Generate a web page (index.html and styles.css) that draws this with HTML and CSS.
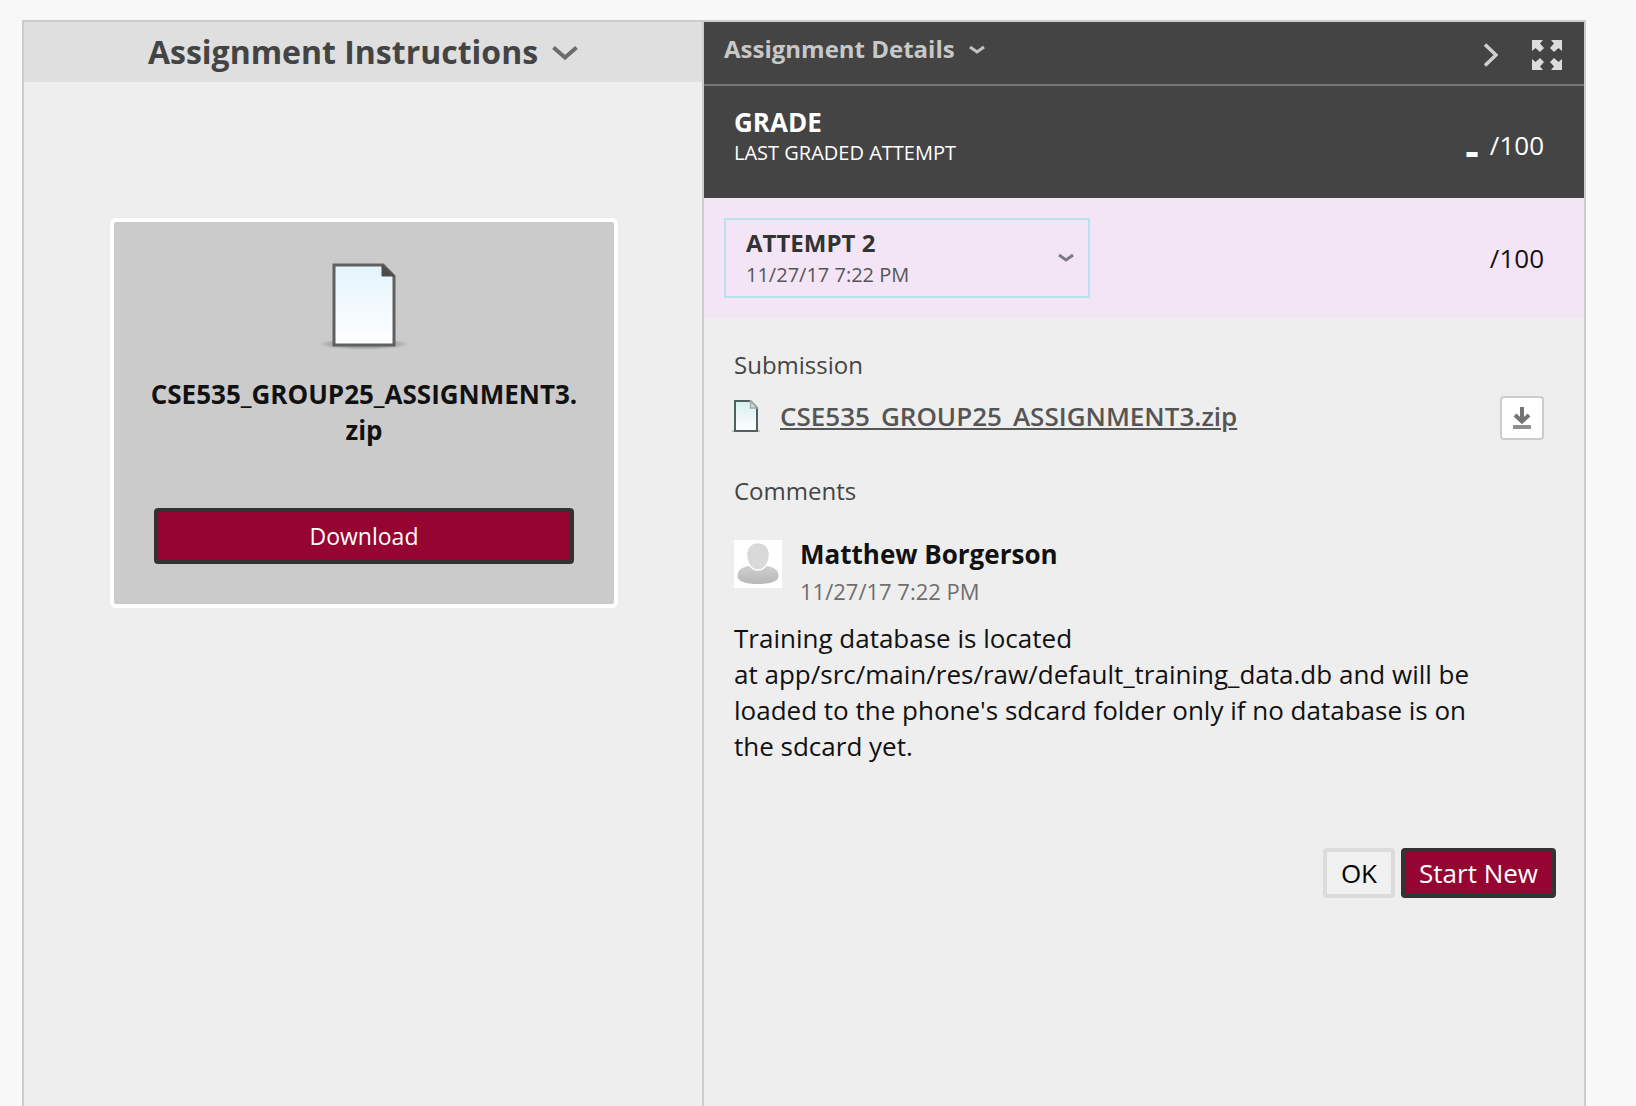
FILE: index.html
```html
<!DOCTYPE html>
<html lang="en">
<head>
<meta charset="utf-8">
<meta name="viewport" content="width=device-width, initial-scale=1">
<title>Assignment Details</title>
<link rel="stylesheet" href="styles.css">
</head>
<body>
<main class="frame">
  <section class="instructions">
    <h1 class="instructions-head">
      <button type="button" class="toggle toggle-large" aria-expanded="true">
        Assignment Instructions
        <svg class="chevron-large" width="26" height="16" viewBox="0 0 26 16" aria-hidden="true"><path d="M1.500 3.500 13 13.500 24.500 3.500" fill="none" stroke="#6c6c6c" stroke-width="4"/></svg>
      </button>
    </h1>
    <div class="instructions-body">
      <article class="file-card">
        <svg class="file-art" width="96" height="96" viewBox="0 0 96 96" aria-hidden="true">
          <defs>
            <linearGradient id="sheet" x1="0" y1="0" x2="0" y2="1"><stop offset="0" stop-color="#e4f4fe"/><stop offset="1" stop-color="#ffffff"/></linearGradient>
            <radialGradient id="shade"><stop offset="0" stop-color="#777" stop-opacity=".8"/><stop offset=".7" stop-color="#888" stop-opacity=".5"/><stop offset="1" stop-color="#999" stop-opacity="0"/></radialGradient>
          </defs>
          <ellipse cx="48" cy="90" rx="47" ry="6" fill="url(#shade)"/>
          <path d="M18 11H67L78 22V91H18Z" fill="url(#sheet)" stroke="#606060" stroke-width="3"/>
          <path d="M66 11V22H78Z" fill="#4c4c4c" stroke="#4c4c4c" stroke-width="1"/>
        </svg>
        <h2 class="file-name">CSE535_GROUP25_ASSIGNMENT3.<wbr>zip</h2>
        <button type="button" class="btn btn-primary btn-block">Download</button>
      </article>
    </div>
  </section>

  <section class="details">
    <header class="details-head">
      <h2 class="details-title">
        <button type="button" class="toggle toggle-light" aria-expanded="true">
          Assignment Details
          <svg width="16" height="10" viewBox="0 0 16 10" aria-hidden="true"><path d="M1 3 8 8 15 3" fill="none" stroke="#c4c4c4" stroke-width="3"/></svg>
        </button>
      </h2>
      <div class="details-actions">
        <button type="button" class="icon-btn" aria-label="Collapse panel">
          <svg width="14" height="24" viewBox="0 0 14 24" aria-hidden="true"><path d="M1 1.500 12 12 1 22.500" fill="none" stroke="#d0d0d0" stroke-width="3.400"/></svg>
        </button>
        <button type="button" class="icon-btn" aria-label="Full screen">
          <svg width="30" height="30" viewBox="0 0 30 30" aria-hidden="true">
            <g fill="#dcdcdc">
              <path d="M0 0H11L8 3.500 12 8 8 12 3.500 8 0 11Z"/>
              <path d="M30 0H19L22 3.500 18 8 22 12 26.500 8 30 11Z"/>
              <path d="M0 30H11L8 26.500 12 22 8 18 3.500 22 0 19Z"/>
              <path d="M30 30H19L22 26.500 18 22 22 18 26.500 22 30 19Z"/>
            </g>
          </svg>
        </button>
      </div>
    </header>

    <div class="grade">
      <div>
        <h3 class="grade-title">GRADE</h3>
        <p class="grade-note">LAST GRADED ATTEMPT</p>
      </div>
      <p class="score"><strong class="score-value">-</strong><span>/100</span></p>
    </div>

    <div class="attempt">
      <button type="button" class="attempt-picker" aria-haspopup="listbox">
        <span class="attempt-text">
          <span class="attempt-name">ATTEMPT 2</span>
          <span class="attempt-date">11/27/17 7:22 PM</span>
        </span>
        <svg width="16" height="10" viewBox="0 0 16 10" aria-hidden="true"><path d="M1 2 8 7 15 2" fill="none" stroke="#7d7683" stroke-width="3"/></svg>
      </button>
      <p class="score">/100</p>
    </div>

    <div class="details-body">
      <h3 class="label">Submission</h3>
      <div class="submission">
        <svg class="submission-icon" width="28" height="32" viewBox="0 0 28 32" aria-hidden="true">
          <defs><linearGradient id="page" x1="0" y1="0" x2="0" y2="1"><stop offset="0" stop-color="#d8eeee"/><stop offset="1" stop-color="#ffffff"/></linearGradient></defs>
          <path d="M0 31H28" stroke="#c2c4c4" stroke-width="2"/>
          <path d="M3 1H18.500L25 8V31H3Z" fill="url(#page)" stroke="#4f6060" stroke-width="2"/>
          <path d="M18.500 1V8H25Z" fill="#d4dcdc" stroke="#a2abab" stroke-width="1.500"/>
        </svg>
        <a class="submission-link" href="#">CSE535_GROUP25_ASSIGNMENT3.zip</a>
        <button type="button" class="download-btn" aria-label="Download submission">
          <svg width="18" height="22" viewBox="0 0 18 22" aria-hidden="true"><path d="M9 0V13M2 8 9 14.500 16 8" fill="none" stroke="#747474" stroke-width="4"/><path d="M0 20H18" stroke="#8f8f8f" stroke-width="4"/></svg>
        </button>
      </div>

      <h3 class="label">Comments</h3>
      <article class="comment">
        <div class="comment-head">
          <svg class="avatar" width="48" height="48" viewBox="0 0 48 48" aria-hidden="true">
            <defs><linearGradient id="person" x1="0" y1="0" x2="0" y2="1"><stop offset="0" stop-color="#cfcfcf"/><stop offset="1" stop-color="#b8b8b8"/></linearGradient></defs>
            <rect width="48" height="48" fill="#fff"/>
            <path d="M3.500 36C3.500 30 8 27 15 26H33C40 27 44.500 30 44.500 36 44.500 41.500 36 44 24 44S3.500 41.500 3.500 36Z" fill="url(#person)"/>
            <path d="M24 2.500C31 2.500 35.500 7.500 35.500 15S31 30 24 30 12.500 22.500 12.500 15 17 2.500 24 2.500Z" fill="#d9d9d9" stroke="#fff" stroke-width="1.500"/>
          </svg>
          <div>
            <h4 class="comment-author">Matthew Borgerson</h4>
            <p class="comment-date">11/27/17 7:22 PM</p>
          </div>
        </div>
        <p class="comment-text">Training database is located at&nbsp;app/src/main/res/raw/default_training_data.db and will be loaded to the phone's sdcard folder only if no database is on the sdcard yet.</p>
      </article>

      <div class="actions">
        <button type="button" class="btn btn-plain">OK</button>
        <button type="button" class="btn btn-primary">Start New</button>
      </div>
    </div>
  </section>
</main>
</body>
</html>
```
FILE: styles.css
```css
* {
  box-sizing: border-box;
}

body {
  margin: 0;
  background: #f8f8f8;
  color: #111;
  font-family: "Open Sans", sans-serif;
  font-size: 26px;
  line-height: 36px;
}

h1, h2, h3, h4, p {
  margin: 0;
}

button {
  font: inherit;
  color: inherit;
  cursor: pointer;
}

svg {
  display: block;
  flex: none;
}

.frame {
  display: grid;
  grid-template-columns: minmax(0, 17fr) minmax(0, 22fr);
  min-height: calc(100vh - 20px);
  margin: 20px 50px 0 22px;
  border: 2px solid #ccc;
  border-bottom: 0;
  background: #eee;
}

.toggle {
  display: flex;
  align-items: center;
  gap: 14px;
  padding: 0;
  border: 0;
  background: none;
  font-weight: 700;
}

/* Left pane */

.instructions {
  border-right: 2px solid #ccc;
}

.instructions-head {
  display: flex;
  justify-content: center;
  background: #dfdfdf;
}

.toggle-large {
  color: #444;
  font-size: 32px;
  font-weight: 660;
  line-height: 60px;
}

.instructions-body {
  padding: 136px 84px 40px 86px;
}

.file-card {
  display: flex;
  flex-direction: column;
  align-items: center;
  padding: 32px 40px 40px;
  border: 4px solid #fff;
  border-radius: 6px;
  background: #cbcbcb;
}

.file-name {
  margin: 26px 0 60px;
  font-size: 26px;
  font-weight: 660;
  line-height: 36px;
  text-align: center;
}

/* Buttons */

.btn {
  padding: 0 14px;
  border: 4px solid #333;
  border-radius: 4px;
  font-size: 26px;
  line-height: 42px;
}

.btn-primary {
  background: #960532;
  color: #fff;
}

.btn-plain {
  border-color: #dbdbdb;
  background: #f0f0f0;
  color: #000;
}

.btn-block {
  width: 100%;
  font-size: 23px;
  line-height: 48px;
}

/* Right pane */

.details-head {
  display: flex;
  justify-content: space-between;
  height: 64px;
  padding: 0 22px 0 20px;
  border-bottom: 2px solid #777;
  background: #444;
}

.toggle-light {
  color: #c8c8c8;
  font-size: 24px;
  line-height: 54px;
}

.details-actions {
  display: flex;
  align-items: center;
  gap: 34px;
  padding-top: 3px;
}

.icon-btn {
  padding: 0;
  border: 0;
  background: none;
}

.grade {
  display: flex;
  justify-content: space-between;
  align-items: flex-end;
  padding: 20px 40px 30px 30px;
  background: #444;
  color: #fff;
}

.grade-title {
  font-size: 26px;
  line-height: 32px;
}

.grade-note {
  font-size: 20px;
  line-height: 30px;
}

.score {
  display: flex;
  align-items: center;
  gap: 11px;
  line-height: 46px;
}

.score-value {
  padding-top: 10px;
  font-size: 42px;
  line-height: 36px;
}

.attempt {
  display: flex;
  justify-content: space-between;
  align-items: center;
  padding: 20px 40px 20px 20px;
  background: #f4e5f6;
}

.attempt-picker {
  display: flex;
  justify-content: space-between;
  align-items: center;
  width: 366px;
  height: 80px;
  padding: 0 14px 0 20px;
  border: 2px solid #b8e3ee;
  background: none;
  text-align: left;
}

.attempt-text {
  display: flex;
  flex-direction: column;
  padding-bottom: 2px;
}

.attempt-name {
  color: #333;
  font-size: 24px;
  font-weight: 700;
  line-height: 36px;
}

.attempt-date {
  color: #555;
  font-size: 20px;
  line-height: 28px;
}

.details-body {
  padding: 31px 40px 40px 30px;
}

.label {
  color: #444;
  font-size: 24px;
  font-weight: 400;
  line-height: 32px;
}

.submission {
  display: flex;
  align-items: flex-start;
  gap: 20px;
  margin: 15px 0 35px;
}

.submission-icon {
  margin: 4px 0 0 -2px;
}

.submission-link {
  color: #555;
  font-weight: 560;
  line-height: 40px;
}

.download-btn {
  display: flex;
  align-items: center;
  justify-content: center;
  width: 44px;
  height: 44px;
  margin-left: auto;
  padding: 0;
  border: 2px solid #ccc;
  border-radius: 4px;
  background: #fff;
}

.comment {
  margin-top: 29px;
  padding-right: 40px;
}

.comment-head {
  display: flex;
  gap: 18px;
  margin-bottom: 10px;
}

.avatar {
  margin-top: 4px;
}

.comment-author {
  font-size: 26px;
  font-weight: 660;
  line-height: 36px;
}

.comment-date {
  color: #6e6e6e;
  font-size: 22px;
  line-height: 38px;
}

.actions {
  display: flex;
  justify-content: flex-end;
  gap: 6px;
  margin: 84px -12px 0 0;
}
```
